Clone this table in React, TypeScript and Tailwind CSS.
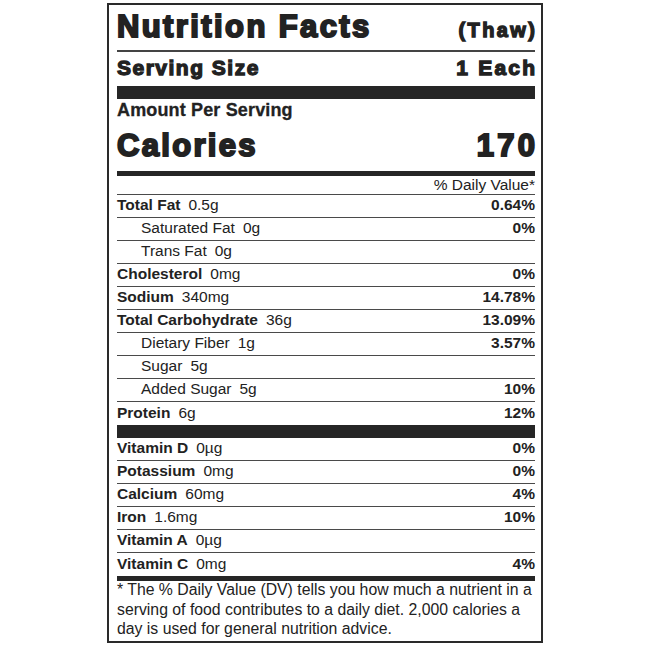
const fats = [
  { label: "Total Fat", amount: "0.5g", dv: "0.64%" },
  { label: "Saturated Fat", amount: "0g", dv: "0%", sub: true },
  { label: "Trans Fat", amount: "0g", dv: "", sub: true },
  { label: "Cholesterol", amount: "0mg", dv: "0%" },
  { label: "Sodium", amount: "340mg", dv: "14.78%" },
  { label: "Total Carbohydrate", amount: "36g", dv: "13.09%" },
  { label: "Dietary Fiber", amount: "1g", dv: "3.57%", sub: true },
  { label: "Sugar", amount: "5g", dv: "", sub: true },
  { label: "Added Sugar", amount: "5g", dv: "10%", sub: true },
  { label: "Protein", amount: "6g", dv: "12%" },
];

const vitamins = [
  { label: "Vitamin D", amount: "0µg", dv: "0%" },
  { label: "Potassium", amount: "0mg", dv: "0%" },
  { label: "Calcium", amount: "60mg", dv: "4%" },
  { label: "Iron", amount: "1.6mg", dv: "10%" },
  { label: "Vitamin A", amount: "0µg", dv: "" },
  { label: "Vitamin C", amount: "0mg", dv: "4%" },
];

type Row = { label: string; amount: string; dv: string; sub?: boolean };

function NutrientRow({ row, last }: { row: Row; last?: boolean }) {
  return (
    <div
      className={`flex justify-between h-[23px] text-[15.5px] leading-[20px] pb-[2px] ${
        last ? "" : "border-b border-[#4a4a4a]"
      } ${row.sub ? "pl-[24px]" : ""}`}
    >
      <div className="flex items-end">
        {row.sub ? <span>{row.label}</span> : <b>{row.label}</b>}
        <span className="ml-[8px]">{row.amount}</span>
      </div>
      <b className="self-end">{row.dv}</b>
    </div>
  );
}

export default function App() {
  return (
    <div className="bg-white w-[650px] h-[650px] pt-[3px] font-['Liberation_Sans',Arial,sans-serif] text-[#222]">
      <div className="w-[436px] mx-auto border-2 border-[#2a2a2a] pl-[8px] pr-[6px]">
        {/* header */}
        <div className="flex justify-between items-baseline pt-[3px] pb-[4px] border-b-2 border-[#444]">
          <span className="font-bold text-[31px] leading-[38px] tracking-[2.4px] [-webkit-text-stroke:2px_#222]">
            Nutrition Facts
          </span>
          <span className="font-bold text-[20px] leading-[20px] tracking-[2.4px] -mr-[2.4px] [-webkit-text-stroke:1.3px_#222]">
            (Thaw)
          </span>
        </div>
        <div className="flex justify-between items-baseline pt-[2px] pb-[4px] leading-[28px]">
          <span className="font-bold text-[21px] tracking-[1.5px] [-webkit-text-stroke:1.3px_#222]">Serving Size</span>
          <span className="font-bold text-[21px] tracking-[2.2px] -mr-[2.2px] [-webkit-text-stroke:1.3px_#222]">
            1 Each
          </span>
        </div>
        <div className="h-[13px] bg-[#262626]" />

        <div className="font-bold text-[18px] leading-[22px] tracking-[0.15px] [-webkit-text-stroke:0.3px_#222]">
          Amount Per Serving
        </div>
        <div className="flex justify-between items-baseline mt-[6px] pb-[6px] leading-[38px]">
          <span className="font-bold text-[31px] tracking-[2.3px] [-webkit-text-stroke:2px_#222]">Calories</span>
          <span className="font-bold text-[31px] tracking-[3.2px] -mr-[3.2px] [-webkit-text-stroke:2px_#222]">170</span>
        </div>
        <div className="h-[5px] bg-[#262626]" />

        <div className="text-right text-[15.5px] leading-[18px] border-b border-[#4a4a4a]">% Daily Value*</div>
        {fats.map((r, i) => (
          <NutrientRow key={r.label} row={r} last={i === fats.length - 1} />
        ))}
        <div className="h-[13px] bg-[#262626]" />

        {vitamins.map((r, i) => (
          <NutrientRow key={r.label} row={r} last={i === vitamins.length - 1} />
        ))}
        <div className="h-[5px] bg-[#262626]" />

        <p className="text-[15.8px] leading-[19.5px] -mt-[1px] pb-[2px]">
          * The % Daily Value (DV) tells you how much a nutrient in a serving of food contributes to a daily diet. 2,000
          calories a day is used for general nutrition advice.
        </p>
      </div>
    </div>
  );
}
